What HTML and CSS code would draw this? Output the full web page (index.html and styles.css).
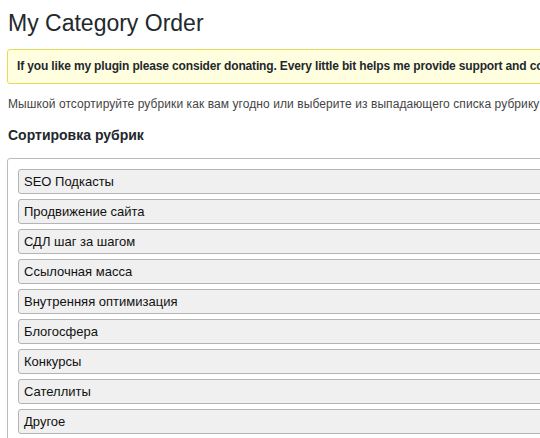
FILE: index.html
```html
<!DOCTYPE html>
<html>
<head>
<meta charset="utf-8">
<link rel="stylesheet" href="styles.css">
</head>
<body>
<div class="wrap">
  <h1 class="title">My Category Order</h1>
  <div class="notice">If you like my plugin please consider donating. Every little bit helps me provide support and continue development.</div>
  <p class="desc">Мышкой отсортируйте рубрики как вам угодно или выберите из выпадающего списка рубрику для сортировки подрубрик.</p>
  <h3 class="heading">Сортировка рубрик</h3>
  <div class="sorter">
    <ul class="list">
      <li class="item">SEO Подкасты</li>
      <li class="item">Продвижение сайта</li>
      <li class="item">СДЛ шаг за шагом</li>
      <li class="item">Ссылочная масса</li>
      <li class="item">Внутренняя оптимизация</li>
      <li class="item">Блогосфера</li>
      <li class="item">Конкурсы</li>
      <li class="item">Сателлиты</li>
      <li class="item">Другое</li>
    </ul>
  </div>
</div>
</body>
</html>
```
FILE: styles.css
```css
html, body {
  margin: 0;
  padding: 0;
  background: #fff;
  overflow: hidden;
}
body {
  font-family: "Liberation Sans", Arial, sans-serif;
  color: #444;
  width: 540px;
  height: 438px;
}
.wrap {
  width: 900px;
  padding-left: 7px;
}
.title {
  margin: 9px 0 0 1px;
  font-size: 23px;
  line-height: 29px;
  font-weight: 400;
  color: #23282d;
}
.notice {
  margin-top: 11px;
  border: 1px solid #e6db55;
  border-radius: 3px;
  background: #ffffe0;
  padding: 7px 9px;
  line-height: 19px;
  font-size: 12px;
  font-weight: bold;
  color: #23282d;
  letter-spacing: -0.15px;
  white-space: nowrap;
}
.desc {
  margin: 12px 0 0 1px;
  font-size: 12px;
  line-height: 16px;
  color: #444;
  letter-spacing: 0.08px;
  white-space: nowrap;
}
.heading {
  margin: 14px 0 0 1px;
  font-size: 14px;
  line-height: 18px;
  font-weight: bold;
  color: #23282d;
}
.sorter {
  margin-top: 14px;
  border: 1px solid #bbb;
  border-radius: 3px;
  padding: 10px;
  height: 400px;
}
.list {
  list-style: none;
  margin: 0;
  padding: 0;
}
.item {
  border: 1px solid #b4b4b4;
  border-radius: 3px;
  background: #f0f0f0;
  line-height: 23px;
  font-size: 13px;
  color: #111;
  padding-left: 5px;
  margin-bottom: 5px;
}
```
